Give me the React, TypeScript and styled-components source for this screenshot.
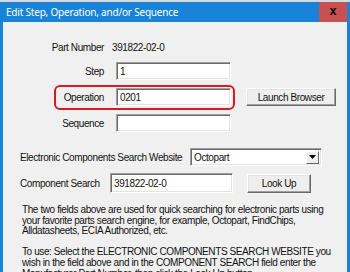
import React from "react";
import styled, { createGlobalStyle } from "styled-components";

const GlobalStyle = createGlobalStyle`
  html, body { margin: 0; padding: 0; background: #1883d7; }
  body { font-family: "Liberation Sans", Arial, sans-serif; }
  * { box-sizing: border-box; }
`;

const Screen = styled.div`
  width: 350px;
  height: 272px;
  overflow: hidden;
  display: flex;
  flex-direction: column;
`;

const TopStrip = styled.div`
  height: 2px;
  background: #d3d9df;
  flex: none;
`;

const Window = styled.div`
  flex: 1;
  display: flex;
  flex-direction: column;
  background: #1883d7;
  padding: 0 3px 0 3px;
  min-height: 0;
`;

const TitleBar = styled.div`
  height: 20px;
  flex: none;
  display: flex;
  align-items: center;
  justify-content: space-between;
`;

const Title = styled.span`
  font-family: "Noto Sans", "Open Sans", sans-serif;
  font-size: 10px;
  color: #ffffff;
  padding-left: 3px;
  letter-spacing: -0.2px;
`;

const CloseButton = styled.div`
  width: 28px;
  height: 20px;
  background: #c75050;
  display: flex;
  align-items: center;
  justify-content: center;
  color: #000;
  font-family: "Liberation Sans", Arial, sans-serif;
  font-weight: bold;
  font-size: 12px;
  line-height: 1;
  padding-bottom: 2px;
`;

const Body = styled.div`
  flex: 1;
  background: #f0f0f0;
  min-height: 0;
  font-family: "Liberation Sans", Arial, sans-serif;
  font-size: 10px;
  letter-spacing: -0.4px;
  color: #111;
  padding-top: 18px;
  display: flex;
  flex-direction: column;
`;

const FieldGrid = styled.div`
  display: grid;
  grid-template-columns: 101px 115px 90px;
  grid-template-rows: 14px 18px 18px 18px;
  column-gap: 12px;
  row-gap: 8px;
  align-items: center;
`;

const Label = styled.span<{ $row: number }>`
  grid-column: 1;
  grid-row: ${(p) => p.$row};
  text-align: right;
  white-space: nowrap;
  position: relative;
  z-index: 2;
`;

const Value = styled.span`
  grid-column: 2 / 4;
  grid-row: 1;
  margin-left: -4px;
`;

const TextInput = styled.div<{ $row?: number; $width?: number; $height?: number }>`
  ${(p) => (p.$row ? `grid-column: 2; grid-row: ${p.$row};` : "")}
  width: ${(p) => (p.$width ? `${p.$width}px` : "100%")};
  height: ${(p) => p.$height ?? 18}px;
  background: #ffffff;
  border: 1px solid;
  border-color: #a0a0a0 #ffffff #ffffff #a0a0a0;
  box-shadow: inset 1px 1px 0 #6a6a6a, inset -1px -1px 0 #e3e3e3;
  padding: 0 3px;
  display: flex;
  align-items: center;
  white-space: nowrap;
  position: relative;
  z-index: 2;
`;

const Highlight = styled.div`
  grid-column: 1 / 3;
  grid-row: 3;
  align-self: stretch;
  margin: -3px -4px -4px 51px;
  border: 2px solid #d91a20;
  border-radius: 6px;
  pointer-events: none;
  z-index: 1;
`;

const Button = styled.div<{ $width: number; $height?: number }>`
  width: ${(p) => p.$width}px;
  height: ${(p) => p.$height ?? 18}px;
  background: #eeeeee;
  border: 1px solid;
  border-color: #ffffff #6a6a6a #6a6a6a #ffffff;
  box-shadow: inset -1px -1px 0 #a0a0a0, inset 1px 1px 0 #e3e3e3;
  display: flex;
  align-items: center;
  justify-content: center;
  white-space: nowrap;
`;

const GridButton = styled(Button)`
  grid-column: 3;
  grid-row: 3;
  margin-left: 3px;
`;

const SearchSection = styled.div`
  display: flex;
  flex-direction: column;
  gap: 7px;
  margin-top: 16px;
  padding-left: 17px;
`;

const SearchRow = styled.div`
  display: flex;
  align-items: center;
`;

const RowLabel = styled.span<{ $width: number }>`
  width: ${(p) => p.$width}px;
  flex: none;
  white-space: nowrap;
`;

const Select = styled(TextInput)`
  padding-right: 2px;
  justify-content: space-between;
`;

const DropArrow = styled.div`
  width: 13px;
  height: 13px;
  background: #eeeeee;
  border: 1px solid;
  border-color: #ffffff #6a6a6a #6a6a6a #ffffff;
  display: flex;
  align-items: center;
  justify-content: center;
`;

const Spacer = styled.div<{ $w: number }>`
  width: ${(p) => p.$w}px;
  flex: none;
`;

const Help = styled.p`
  margin: 12px 0 0 0;
  padding-left: 19px;
  line-height: 10.6px;
  white-space: nowrap;
`;

export default function App() {
  return (
    <>
      <GlobalStyle />
      <Screen>
        <TopStrip />
        <Window>
          <TitleBar>
            <Title>Edit Step, Operation, and/or Sequence</Title>
            <CloseButton>x</CloseButton>
          </TitleBar>
          <Body>
            <FieldGrid>
              <Label $row={1}>Part Number</Label>
              <Value>391822-02-0</Value>

              <Label $row={2}>Step</Label>
              <TextInput $row={2}>1</TextInput>

              <Highlight />
              <Label $row={3}>Operation</Label>
              <TextInput $row={3}>0201</TextInput>
              <GridButton $width={90}>Launch Browser</GridButton>

              <Label $row={4}>Sequence</Label>
              <TextInput $row={4} />
            </FieldGrid>

            <SearchSection>
              <SearchRow>
                <RowLabel $width={170}>Electronic Components Search Website</RowLabel>
                <Select $width={132}>
                  <span>Octopart</span>
                  <DropArrow>
                    <svg width="7" height="4" viewBox="0 0 7 4">
                      <path d="M0 0 H7 L3.5 4 Z" fill="#000" />
                    </svg>
                  </DropArrow>
                </Select>
              </SearchRow>
              <SearchRow>
                <RowLabel $width={90}>Component Search</RowLabel>
                <TextInput $width={123} $height={20}>391822-02-0</TextInput>
                <Spacer $w={14} />
                <Button $width={64} $height={19}>Look Up</Button>
              </SearchRow>
            </SearchSection>

            <Help>
              The two fields above are used for quick searching for electronic parts using
              <br />
              your favorite parts search engine, for example, Octopart, FindChips,
              <br />
              Alldatasheets, ECIA Authorized, etc.
              <br />
              <br />
              To use: Select the ELECTRONIC COMPONENTS SEARCH WEBSITE you
              <br />
              wish in the field above and in the COMPONENT SEARCH field enter the
              <br />
              Manufacturer Part Number, then click the Look Up button.
            </Help>
          </Body>
        </Window>
      </Screen>
    </>
  );
}
